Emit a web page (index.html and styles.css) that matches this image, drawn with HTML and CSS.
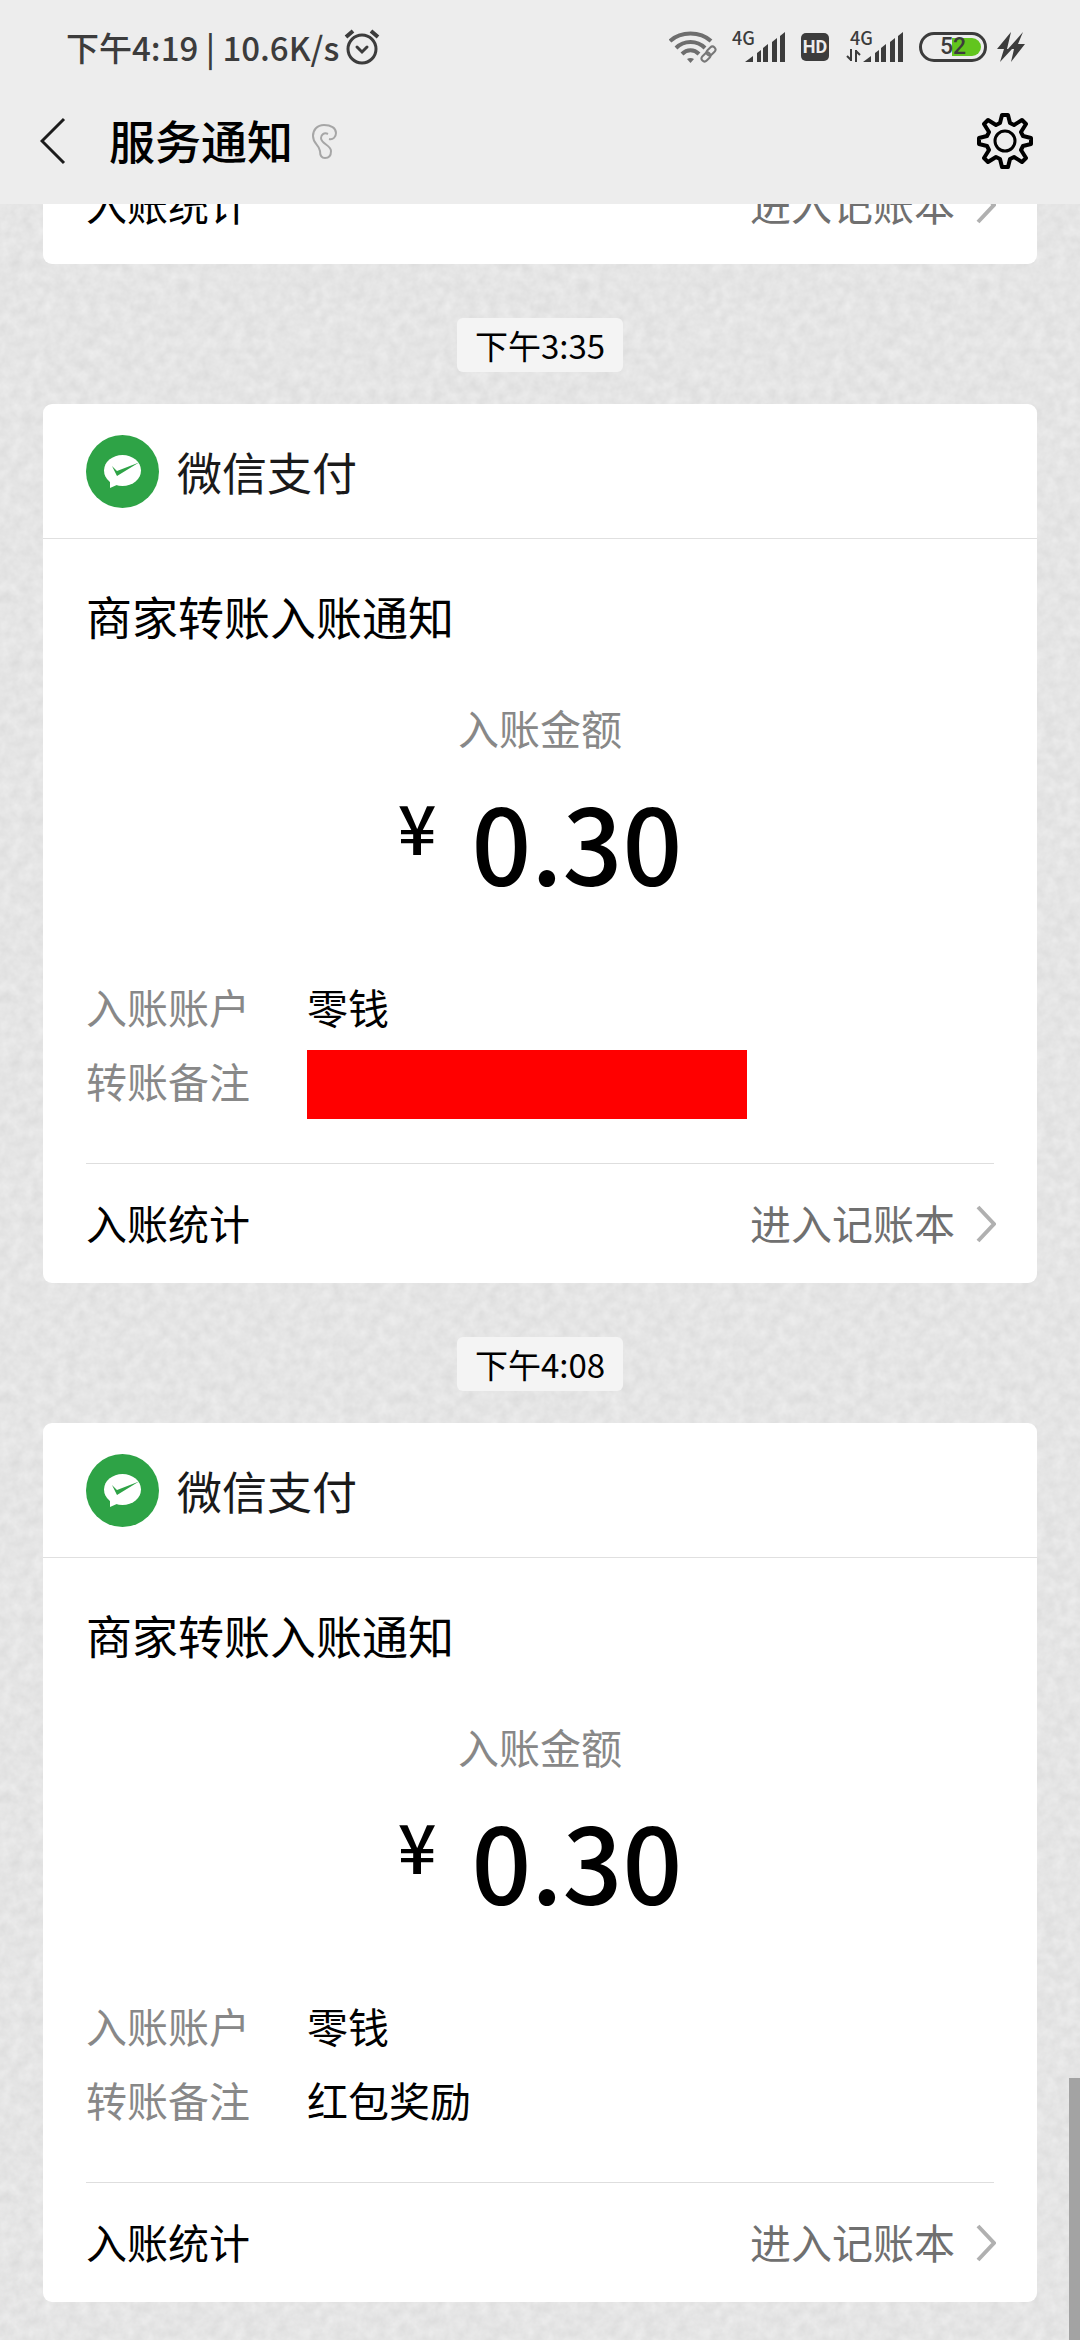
FILE: index.html
```html
<!DOCTYPE html>
<html lang="zh-CN">
<head>
<meta charset="utf-8">
<meta name="viewport" content="width=device-width, initial-scale=1">
<title>服务通知</title>
<link rel="stylesheet" href="styles.css">
</head>
<body>
<div class="screen">
  <header class="top">
    <div class="status">
      <div class="status-left">
        <span>下午4:19 | 10.6K/s</span>
        <svg class="alarm" width="36" height="36" viewBox="0 0 36 36" fill="none" stroke="#3c3c3c" stroke-width="3" stroke-linecap="round">
          <circle cx="18" cy="20" r="14"/><path d="M13 18l5 5 5-5"/><path d="M2 8l7-6M34 8l-7-6" stroke-linecap="butt" stroke-width="4"/>
        </svg>
      </div>
      <div class="status-right">
        <svg width="48" height="34" viewBox="0 0 48 34" fill="none" stroke="#6e6e6e" stroke-width="4">
          <path d="M1 11c11-10 30-10 41 0"/><path d="M7 18c8-8 21-8 29 0"/><path d="M13 24c5-5 12-5 17 0"/>
          <path d="M18 29q3.500-2 7 0l-3.500 4z" fill="#6e6e6e" stroke="none"/>
          <g stroke="#777" stroke-width="2"><rect x="-5" y="-3" width="10" height="6" rx="3" transform="translate(42 21) rotate(-45)"/><rect x="-5" y="-3" width="10" height="6" rx="3" transform="translate(37 27) rotate(-45)"/></g>
        </svg>
        <div class="signal">
          <span class="net">4G</span>
          <svg width="54" height="34" viewBox="0 0 54 34" fill="#3c3c3c"><path d="M13 32l8-6v6zM25 32v-9l4-3v12zM31 32v-14l5-4v18zM40 32v-20l5-4v24zM48 32v-26l5-4v30z"/></svg>
        </div>
        <span class="hd">HD</span>
        <div class="signal signal-data">
          <span class="net">4G</span>
          <svg width="60" height="34" viewBox="0 0 60 34" fill="#3c3c3c"><path d="M19 32l8-6v6zM31 32v-9l4-3v12zM37 32v-14l5-4v18zM46 32v-20l5-4v24zM54 32v-26l5-4v30z"/><path d="M7 19v12M12 32V20M7 30l-4-4M12 21l4 4" fill="none" stroke="#3c3c3c" stroke-width="2"/></svg>
        </div>
        <span class="battery"><span class="battery-text">52</span></span>
        <svg class="bolt" width="30" height="32" viewBox="0 0 30 32" fill="#3c3c3c"><path d="M15 1L1 18h7L4 31 16 18h-5zM27 1L12 18h6l-3 13 14-18h-7z"/></svg>
      </div>
    </div>
    <div class="nav">
      <button class="icon-btn" type="button" aria-label="返回">
        <svg width="26" height="48" viewBox="0 0 26 48" fill="none" stroke="#1c1c1c" stroke-width="3"><path d="M24 2L2 24l22 22"/></svg>
      </button>
      <h1 class="nav-title">服务通知</h1>
      <svg class="ear" width="28" height="38" viewBox="0 0 28 38" fill="none" stroke="#a6a6a6" stroke-width="2"><path d="M18 17c4 1 7-2 7-6 0-5-5-8-12-8C6 3 2 8 2 14c0 8 6 8 7 15 0 5 2 7 5 7 4 0 6-3 6-7 0-6-10-7-10-13 0-3 3-6 7-4"/></svg>
      <button class="icon-btn settings" type="button" aria-label="设置">
        <svg width="56" height="56" viewBox="-28 -28 56 56" fill="none" stroke="#000" stroke-width="4" stroke-linejoin="round"><circle r="10" stroke-width="3"/><path d="M-5-18l2-8h6l2 8 4 2 8-5 4 4-5 8 2 4 8 2v6l-8 2-2 4 5 8-4 4-8-5-4 2-2 8h-6l-2-8-4-2-8 5-4-4 5-8-2-4-8-2v-6l8-2 2-4-5-8 4-4 8 5z"/></svg>
      </button>
    </div>
  </header>

  <main class="chat">
    <article class="card">
      <a class="link-row" href="#ledger"><span class="link-text">入账统计</span><span class="link-more"><span class="link-text">进入记账本</span><svg width="20" height="38" viewBox="0 0 20 38"><path d="M2 2l16 17L2 36"/></svg></span></a>
    </article>

    <time class="stamp">下午3:35</time>

    <article class="card">
      <header class="card-head">
        <svg class="avatar" width="73" height="73" viewBox="0 0 73 73"><circle cx="36.500" cy="36.500" r="36.500" fill="#2ea346"/><ellipse cx="36.500" cy="35.500" rx="18.500" ry="15.500" fill="#fff"/><path d="M24 44v9l9-4z" fill="#fff"/><path d="M26 31l5 5L53 27.500 31 41z" fill="#2ea346"/></svg>
        <span>微信支付</span>
      </header>
      <div class="card-body">
        <h2 class="card-title">商家转账入账通知</h2>
        <p class="amount-label">入账金额</p>
        <p class="amount"><span class="yen">¥</span><span>0.30</span></p>
        <dl class="details">
          <dt>入账账户</dt><dd>零钱</dd>
          <dt>转账备注</dt><dd><span class="redacted"></span></dd>
        </dl>
        <a class="link-row" href="#ledger"><span class="link-text">入账统计</span><span class="link-more"><span class="link-text">进入记账本</span><svg width="20" height="38" viewBox="0 0 20 38"><path d="M2 2l16 17L2 36"/></svg></span></a>
      </div>
    </article>

    <time class="stamp">下午4:08</time>

    <article class="card">
      <header class="card-head">
        <svg class="avatar" width="73" height="73" viewBox="0 0 73 73"><circle cx="36.500" cy="36.500" r="36.500" fill="#2ea346"/><ellipse cx="36.500" cy="35.500" rx="18.500" ry="15.500" fill="#fff"/><path d="M24 44v9l9-4z" fill="#fff"/><path d="M26 31l5 5L53 27.500 31 41z" fill="#2ea346"/></svg>
        <span>微信支付</span>
      </header>
      <div class="card-body">
        <h2 class="card-title">商家转账入账通知</h2>
        <p class="amount-label">入账金额</p>
        <p class="amount"><span class="yen">¥</span><span>0.30</span></p>
        <dl class="details">
          <dt>入账账户</dt><dd>零钱</dd>
          <dt>转账备注</dt><dd>红包奖励</dd>
        </dl>
        <a class="link-row" href="#ledger"><span class="link-text">入账统计</span><span class="link-more"><span class="link-text">进入记账本</span><svg width="20" height="38" viewBox="0 0 20 38"><path d="M2 2l16 17L2 36"/></svg></span></a>
      </div>
    </article>
    <div class="scrollbar"></div>
  </main>
</div>
</body>
</html>
```
FILE: styles.css
```css
* { box-sizing: border-box; margin: 0; }

body {
  font-family: "Noto Sans CJK SC", sans-serif;
  font-size: 41px;
  color: #000;
  background: #e4e4e4;
}

svg { display: block; flex: none; }

.screen { display: flex; flex-direction: column; height: 100vh; }

/* status bar and title bar */
.top { flex: none; background: #ededed; }

.status {
  display: flex;
  justify-content: space-between;
  align-items: center;
  height: 94px;
  padding: 0 54px 0 66px;
  color: #3c3c3c;
}

.status-left {
  display: flex;
  align-items: center;
  gap: 5px;
  font-size: 33px;
  font-weight: 500;
}

.status-right { display: flex; align-items: center; gap: 15px; }

.bolt { margin-left: -6px; }

.signal { position: relative; }

.net {
  position: absolute;
  top: -2px;
  left: 0;
  font: 500 18px/18px "Noto Sans CJK SC", sans-serif;
}

.signal-data .net { left: 6px; }

.hd {
  width: 28px;
  border-radius: 5px;
  background: #3c3c3c;
  color: #ededed;
  font: 700 18px/28px Roboto, sans-serif;
  text-align: center;
}

.battery {
  display: block;
  width: 68px;
  padding: 3px;
  border: 3px solid #3c3c3c;
  border-radius: 15px;
}

.battery-text {
  display: block;
  border-radius: 0 12px 12px 0;
  background: linear-gradient(to right, transparent 48%, #62c51e 48%);
  font: 500 23px/18px Roboto, sans-serif;
  text-align: center;
}

.nav {
  display: flex;
  align-items: center;
  height: 110px;
  padding: 0 47px 16px 40px;
}

.icon-btn { padding: 0; border: 0; background: none; }

.nav-title {
  margin: 0 18px 0 43px;
  padding-bottom: 5px;
  font-size: 46px;
  font-weight: 500;
  line-height: 60px;
}

.settings { margin-left: auto; }

/* conversation, resting at its latest message */
.chat {
  position: relative;
  display: flex;
  flex: 1;
  flex-direction: column;
  justify-content: flex-end;
  min-height: 0;
  padding: 0 43px 38px;
  overflow: hidden;
  background: #e4e4e4 url("data:image/svg+xml,%3Csvg xmlns='http://www.w3.org/2000/svg' width='400' height='400'%3E%3Cfilter id='n' x='0' y='0' width='100%25' height='100%25' color-interpolation-filters='sRGB'%3E%3CfeTurbulence type='fractalNoise' baseFrequency='.09' numOctaves='3' stitchTiles='stitch'/%3E%3CfeColorMatrix values='.08 0 0 0 .857 .08 0 0 0 .857 .08 0 0 0 .857 0 0 0 0 1'/%3E%3C/filter%3E%3Crect width='400' height='400' filter='url(%23n)'/%3E%3C/svg%3E");
}

.stamp {
  flex: none;
  align-self: center;
  margin: 54px 0 32px;
  padding: 0 18px;
  border-radius: 6px;
  background: #f4f4f4;
  font-size: 33px;
  line-height: 54px;
}

.card { flex: none; border-radius: 9px; background: #fff; }

.card > .link-row { margin: 0 43px; }

.card-head {
  display: flex;
  align-items: center;
  gap: 18px;
  padding: 31px 43px 30px;
  border-bottom: 1px solid #e0e0e0;
  color: #1a1a1a;
  font-size: 45px;
  line-height: 60px;
}

.card-body { padding: 46px 43px 0; }

.card-title { font-size: 46px; font-weight: 400; line-height: 60px; }

.amount-label {
  margin-top: 55px;
  color: #888;
  line-height: 54px;
  text-align: center;
}

.amount {
  display: flex;
  justify-content: center;
  gap: 35px;
  margin: 31px 0 74px;
  font-size: 105px;
  font-weight: 500;
  line-height: 110px;
}

.yen { font-size: 68px; line-height: 82px; }

.details {
  display: grid;
  grid-template-columns: 221px 1fr;
  margin-bottom: 46px;
  line-height: 74px;
}

.details dt { color: #888; }
.details dd { display: flex; align-items: center; height: 74px; }

.redacted { width: 440px; height: 69px; margin-top: 9px; background: #f00; }

.link-row {
  display: flex;
  justify-content: space-between;
  align-items: center;
  height: 120px;
  border-top: 1px solid #dedede;
  color: #000;
  text-decoration: none;
}

.link-text { padding-bottom: 4px; }
.link-more { display: flex; align-items: center; gap: 21px; margin-right: -2px; color: #707070; }
.link-more path { fill: none; stroke: #b0b0b0; stroke-width: 4; }

.scrollbar {
  position: absolute;
  right: 0;
  bottom: 0;
  width: 11px;
  height: 262px;
  background: #a3a3a3;
}
```
